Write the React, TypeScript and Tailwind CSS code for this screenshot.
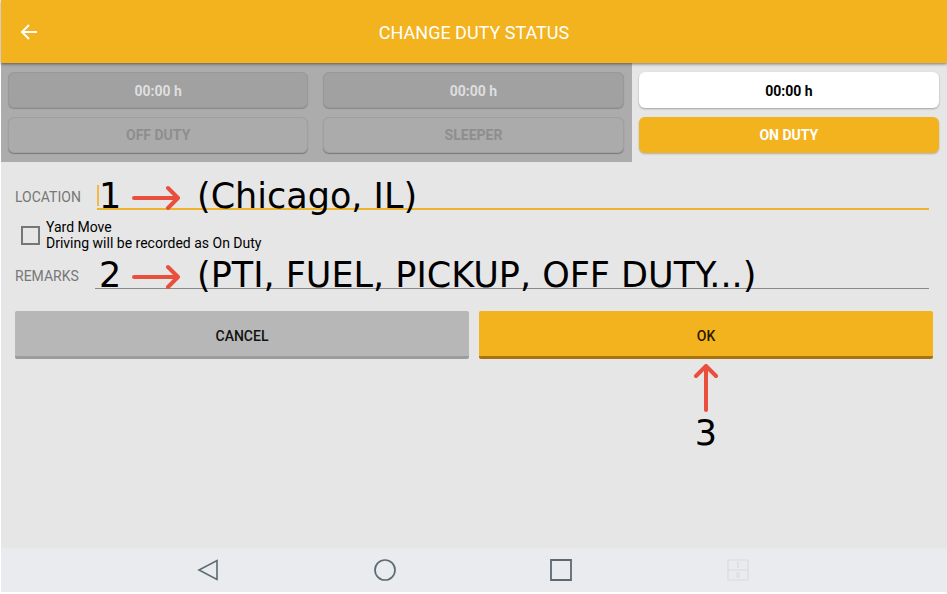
import type { ReactNode } from "react";

type Duty = { id: string; label: string; time: string; active: boolean };

const duties: Duty[] = [
  { id: "off", label: "OFF DUTY", time: "00:00 h", active: false },
  { id: "sleeper", label: "SLEEPER", time: "00:00 h", active: false },
  { id: "on", label: "ON DUTY", time: "00:00 h", active: true },
];

function DutyColumn({ duty }: { duty: Duty }) {
  const timeStyle = duty.active
    ? "bg-white text-black shadow-[0_1px_2px_rgba(0,0,0,0.3)]"
    : "bg-[#a1a1a1] text-[#dedede] border border-[#989898] shadow-[0_1px_1px_rgba(0,0,0,0.2)]";
  const labelStyle = duty.active
    ? "bg-[#f3b31f] text-white shadow-[0_1px_2px_rgba(0,0,0,0.25)]"
    : "bg-[#ababab] text-[#8e8e8e] border border-[#a0a0a0] shadow-[0_1px_1px_rgba(0,0,0,0.3)]";
  return (
    <div
      className={`flex flex-col gap-[9px] py-[9px] pr-2 pl-[7px] ${duty.active ? "" : "bg-[#acacac]"}`}
    >
      <div
        className={`flex h-9 items-center justify-center rounded-md pt-[2px] text-sm font-bold ${timeStyle}`}
      >
        {duty.time}
      </div>
      <button
        type="button"
        className={`h-9 rounded-md text-sm font-bold ${labelStyle}`}
      >
        {duty.label}
      </button>
    </div>
  );
}

function StepArrow({ up = false }: { up?: boolean }) {
  return (
    <svg
      width="48"
      height="26"
      viewBox="0 0 48 26"
      fill="none"
      stroke="#e94f3d"
      strokeWidth="4"
      strokeLinecap="round"
      strokeLinejoin="round"
      className={up ? "-rotate-90" : "mt-1"}
      aria-hidden="true"
    >
      <path d="M2 13H46M36 3L46 13L36 23" />
    </svg>
  );
}

function Hint({ step, children }: { step: string; children: ReactNode }) {
  return (
    <div className="pointer-events-none absolute -bottom-1 left-[84px] flex h-9 items-center whitespace-nowrap font-['DejaVu_Sans',sans-serif] text-[35px] leading-9 text-black">
      <span className="w-[33px]">{step}</span>
      <StepArrow />
      <span className="ml-[17px]">{children}</span>
    </div>
  );
}

export default function App() {
  return (
    <div className="flex min-h-screen flex-col border-b-2 border-l border-white bg-[#e6e6e6] font-[Roboto,sans-serif]">
      <header className="relative z-10 grid h-[63px] grid-cols-[56px_1fr_56px] items-center bg-[#f3b31f] shadow-[0_1px_3px_rgba(0,0,0,0.5)]">
        <button type="button" aria-label="Back" className="flex h-full items-center justify-center text-white">
          <svg width="18" height="18" viewBox="0 0 18 18" fill="none" stroke="currentColor" strokeWidth="2">
            <path d="M17 9H2M9 2L2 9L9 16" />
          </svg>
        </button>
        <h1 className="pt-[2px] text-center text-lg text-white">CHANGE DUTY STATUS</h1>
      </header>

      <section className="grid grid-cols-3" aria-label="Duty status">
        {duties.map((duty) => (
          <DutyColumn key={duty.id} duty={duty} />
        ))}
      </section>

      <form className="flex flex-1 flex-col px-[14px]">
        <div className="relative mt-3 mr-1 flex h-9 items-end gap-4">
          <label htmlFor="location" className="self-center pt-[10px] text-sm text-[#777777]">
            LOCATION
          </label>
          <div className="flex h-full flex-1 items-end border-b-2 border-[#eeb42b]">
            <input
              id="location"
              type="text"
              className="mb-[2px] h-[21px] w-full border-l-2 border-[#f3b84a] bg-transparent outline-none"
            />
          </div>
          <Hint step="1">(Chicago, IL)</Hint>
        </div>

        <div className="mt-[9px] flex items-center gap-[6px] pl-[6px]">
          <input
            id="yard"
            type="checkbox"
            className="size-[19px] appearance-none border-2 border-[#767676] checked:bg-[#f3b31f]"
          />
          <label htmlFor="yard" className="text-sm leading-4 text-black">
            Yard Move
            <br />
            Driving will be recorded as On Duty
          </label>
        </div>

        <div className="relative mt-[2px] mr-1 flex h-9 items-end gap-4">
          <label htmlFor="remarks" className="self-center pt-[10px] text-sm text-[#777777]">
            REMARKS
          </label>
          <input
            id="remarks"
            type="text"
            className="h-9 flex-1 border-b border-[#8a8a8a] bg-transparent outline-none"
          />
          <Hint step="2">(PTI, FUEL, PICKUP, OFF DUTY...)</Hint>
        </div>

        <div className="mt-[22px] grid grid-cols-2 gap-[10px]">
          <button
            type="button"
            className="h-12 rounded-xs border-b-3 border-[#9c9c9c] bg-[#b7b7b7] pt-1 text-sm font-medium text-[#111111]"
          >
            CANCEL
          </button>
          <div className="relative">
            <button
              type="button"
              className="h-12 w-full rounded-xs border-b-3 border-[#a8730f] bg-[#f3b31f] pt-1 text-sm font-medium text-[#2b1a00]"
            >
              OK
            </button>
            <div className="pointer-events-none absolute inset-x-0 top-full flex flex-col items-center pt-4 font-['DejaVu_Sans',sans-serif] text-[35px] leading-9 text-black">
              <StepArrow up />
              <span className="pt-[14px]">3</span>
            </div>
          </div>
        </div>
      </form>

      <nav
        className="grid h-11 grid-cols-4 items-center justify-items-center bg-[#e9ebef] pr-[121px] pl-[119px] text-[#5c6b73]"
        aria-label="System"
      >
        <button type="button" aria-label="Back">
          <svg className="block" width="22" height="22" viewBox="0 0 22 22" fill="none" stroke="currentColor" strokeWidth="1.6">
            <path d="M20 1.5V20.5L2 11Z" />
          </svg>
        </button>
        <button type="button" aria-label="Home">
          <svg className="block" width="22" height="22" viewBox="0 0 22 22" fill="none" stroke="currentColor" strokeWidth="1.7">
            <circle cx="11" cy="11" r="10" />
          </svg>
        </button>
        <button type="button" aria-label="Recent apps">
          <svg className="block" width="22" height="22" viewBox="0 0 22 22" fill="none" stroke="currentColor" strokeWidth="1.8">
            <path d="M1 1H21V21H1Z" />
          </svg>
        </button>
        <button type="button" aria-label="Split screen" className="text-[#dcdfe3]">
          <svg className="block" width="22" height="22" viewBox="0 0 22 22" fill="none" stroke="currentColor" strokeWidth="1.6">
            <rect x="1" y="1" width="20" height="20" rx="1" />
            <path d="M1 11H21M11 3V9M9.500 4H11M9 14H12V16H10V18H13" />
          </svg>
        </button>
      </nav>
    </div>
  );
}
